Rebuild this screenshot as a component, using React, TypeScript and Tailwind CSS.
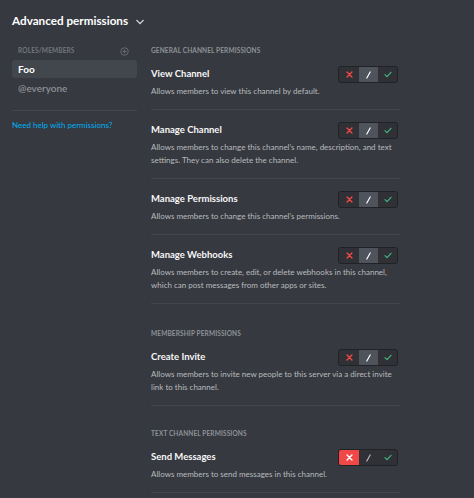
import React from "react"

type State = "deny" | "neutral" | "allow"

type Perm = { name: string; desc: string; state: State }

const SECTIONS: { title: string; perms: Perm[] }[] = [
  {
    title: "General Channel Permissions",
    perms: [
      { name: "View Channel", desc: "Allows members to view this channel by default.", state: "neutral" },
      {
        name: "Manage Channel",
        desc: "Allows members to change this channel’s name, description, and text settings. They can also delete the channel.",
        state: "neutral",
      },
      { name: "Manage Permissions", desc: "Allows members to change this channel’s permissions.", state: "neutral" },
      {
        name: "Manage Webhooks",
        desc: "Allows members to create, edit, or delete webhooks in this channel, which can post messages from other apps or sites.",
        state: "neutral",
      },
    ],
  },
  {
    title: "Membership Permissions",
    perms: [
      {
        name: "Create Invite",
        desc: "Allows members to invite new people to this server via a direct invite link to this channel.",
        state: "neutral",
      },
    ],
  },
  {
    title: "Text Channel Permissions",
    perms: [{ name: "Send Messages", desc: "Allows members to send messages in this channel.", state: "deny" }],
  },
]

function XIcon({ color }: { color: string }) {
  return (
    <svg width="7" height="7" viewBox="0 0 10 10">
      <path d="M1.5 1.5l7 7M8.5 1.5l-7 7" stroke={color} strokeWidth="2" strokeLinecap="round" />
    </svg>
  )
}

function SlashIcon({ color }: { color: string }) {
  return (
    <svg width="7" height="8" viewBox="0 0 10 12">
      <path d="M7.5 1.5L2.5 10.5" stroke={color} strokeWidth="1.8" strokeLinecap="round" />
    </svg>
  )
}

function CheckIcon({ color }: { color: string }) {
  return (
    <svg width="8" height="7" viewBox="0 0 12 10">
      <path d="M1.5 5.2l3 3 6-6.5" stroke={color} strokeWidth="1.8" fill="none" strokeLinecap="round" strokeLinejoin="round" />
    </svg>
  )
}

function Toggle({ state }: { state: State }) {
  return (
    <div className="mr-[2px] flex h-[17px] overflow-hidden rounded-[3px] border border-[#202225] bg-[#2f3136]">
      <div
        className={
          state === "deny"
            ? "flex w-[20px] items-center justify-center bg-[#f04747]"
            : "flex w-[20px] items-center justify-center"
        }
      >
        <XIcon color={state === "deny" ? "#ffffff" : "#f04747"} />
      </div>
      <div
        className={
          state === "neutral"
            ? "flex w-[19px] items-center justify-center bg-[#4f545c]"
            : "flex w-[19px] items-center justify-center"
        }
      >
        <SlashIcon color={state === "neutral" ? "#ffffff" : "#b9bbbe"} />
      </div>
      <div className="flex w-[19px] items-center justify-center">
        <CheckIcon color="#43b581" />
      </div>
    </div>
  )
}

export default function App() {
  return (
    <div
      className="h-[498px] w-[474px] overflow-hidden bg-[#36393f]"
      style={{ fontFamily: "Lato, 'Noto Sans', 'Liberation Sans', sans-serif" }}
    >
      <div className="flex h-[42px] items-center gap-[8px] pl-3">
        <h1 className="text-[11.7px] font-bold text-white">Advanced permissions</h1>
        <svg width="8" height="6" viewBox="0 0 10 6" className="mt-[1px]">
          <path d="M1 1l4 4 4-4" stroke="#dcddde" strokeWidth="1.6" fill="none" strokeLinecap="round" />
        </svg>
      </div>

      <div className="flex">
        <aside className="ml-3 w-[125px]">
          <div className="flex h-[18px] items-center justify-between px-1.5">
            <span className="text-[6.5px] font-bold uppercase tracking-[0.02em] text-[#72767d]">Roles/Members</span>
            <svg width="9" height="9" viewBox="0 0 12 12" className="mr-[2px]">
              <circle cx="6" cy="6" r="5" stroke="#72767d" strokeWidth="1.1" fill="none" />
              <path d="M6 3.5v5M3.5 6h5" stroke="#72767d" strokeWidth="1.1" />
            </svg>
          </div>
          <div className="flex h-[18px] items-center rounded-[3px] bg-[#42464d] px-1.5">
            <span className="text-[10px] font-bold text-white">Foo</span>
          </div>
          <div className="mt-[1px] flex h-[18px] items-center px-1.5">
            <span className="text-[10px] font-semibold text-[#8e9297]">@everyone</span>
          </div>
          <div className="mt-[13px] border-t border-[#42454a]" />
          <p className="mt-[8px] text-[8px] text-[#00b0f4]">Need help with permissions?</p>
        </aside>

        <main className="ml-[14px] w-[249px]">
          {SECTIONS.map((section, si) => (
            <section
              key={section.title}
              className={si === 0 ? "" : si === 1 ? "mt-[21px]" : "mt-[19px]"}
            >
              <h2 className="flex h-[18px] items-center text-[6.5px] font-bold uppercase tracking-[0.02em] text-[#8e9297]">
                {section.title}
              </h2>
              {section.perms.map((p, pi) => (
                <div
                  key={p.name}
                  className={
                    pi === 0
                      ? "mt-[6px] border-b border-[#42454a] pb-[11px]"
                      : "border-b border-[#42454a] pt-[12px] pb-[11px]"
                  }
                >
                  <div className="flex h-[17px] items-center justify-between">
                    <span className="text-[9.5px] font-bold text-[#f6f6f7]">{p.name}</span>
                    <Toggle state={p.state} />
                  </div>
                  <p className="mt-[2px] pr-[4px] text-[8px] leading-[13px] text-[#b9bbbe]">{p.desc}</p>
                </div>
              ))}
            </section>
          ))}
        </main>
      </div>
    </div>
  )
}
